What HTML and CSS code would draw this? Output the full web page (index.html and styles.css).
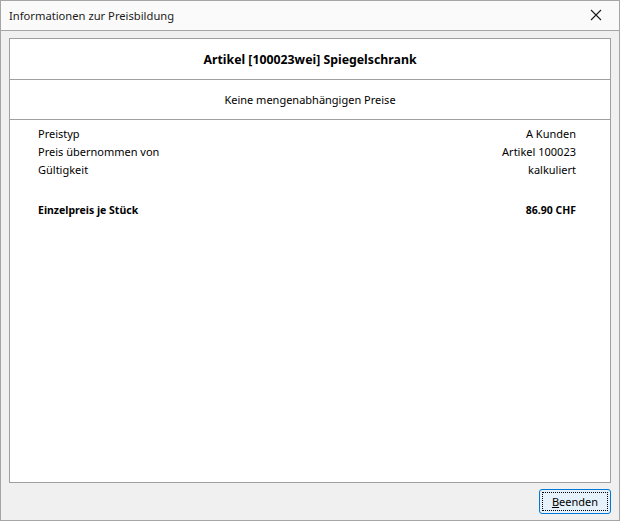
FILE: index.html
```html
<html>

<head>
  <meta name="viewport" content="width=device-width, initial-scale=1.0">
  <link rel="stylesheet" href="styles.css">
</head>

<body>
  <div id="window">
    <div id="titlebar">
      <span class="title">Informationen zur Preisbildung</span>
      <svg class="close" width="12" height="12" viewBox="0 0 12 12">
        <path d="M1 1 L11 11 M11 1 L1 11" stroke="#1a1a1a" stroke-width="1.1" fill="none" />
      </svg>
    </div>
    <div id="client">
      <div class="panel">
        <div class="head">Artikel [100023wei] Spiegelschrank</div>
        <div class="sub">Keine mengenabhängigen Preise</div>
        <div class="rows">
          <div class="row"><span>Preistyp</span><span>A Kunden</span></div>
          <div class="row"><span>Preis übernommen von</span><span>Artikel 100023</span></div>
          <div class="row"><span>Gültigkeit</span><span>kalkuliert</span></div>
          <div class="row total"><span>Einzelpreis je Stück</span><span>86.90 CHF</span></div>
        </div>
      </div>
      <div class="buttons">
        <button class="btn"><span class="focus"><u>B</u>eenden</span></button>
      </div>
    </div>
  </div>
</body>

</html>
```

FILE: styles.css
```css
* {
  box-sizing: border-box;
}

body {
  margin: 0;
  padding: 0;
  font-family: "Noto Sans", "Liberation Sans", sans-serif;
  font-size: 11px;
  color: #000;
}

#window {
  width: 620px;
  height: 521px;
  border: 1px solid #a5a5a5;
  background-color: #f0f0f0;
  display: flex;
  flex-direction: column;
}

#titlebar {
  height: 30px;
  flex: none;
  background-color: #fafafa;
  border-bottom: 1px solid #a5a5a5;
  display: flex;
  align-items: center;
  justify-content: space-between;
  padding: 0 17px 1px 8px;
  font-size: 11.2px;
}

#titlebar .title {
  color: #1a1a1a;
}

#client {
  flex: 1;
  display: flex;
  flex-direction: column;
  padding: 7px 8px 6px 8px;
}

.panel {
  flex: 1;
  background-color: #fff;
  border: 1px solid #a0a0a0;
}

.head {
  height: 41px;
  border-bottom: 1px solid #a0a0a0;
  display: flex;
  align-items: center;
  justify-content: center;
  font-weight: bold;
  font-size: 12.3px;
}

.sub {
  height: 40px;
  border-bottom: 1px solid #a0a0a0;
  display: flex;
  align-items: center;
  justify-content: center;
}

.rows {
  padding: 5px 34px 0 28px;
}

.row {
  display: flex;
  justify-content: space-between;
  line-height: 18px;
}

.row.total {
  margin-top: 22px;
  font-weight: bold;
  font-size: 10.5px;
}

.buttons {
  display: flex;
  justify-content: flex-end;
  padding-top: 6px;
}

.btn {
  width: 72px;
  height: 25px;
  padding: 2px;
  border: 1px solid #0078d7;
  border-radius: 3px;
  background-color: #e5f1fb;
  font-family: inherit;
  font-size: 11px;
  color: #000;
}

.btn .focus {
  display: flex;
  align-items: center;
  justify-content: center;
  height: 100%;
  border: 1px dotted #000;
}
```
